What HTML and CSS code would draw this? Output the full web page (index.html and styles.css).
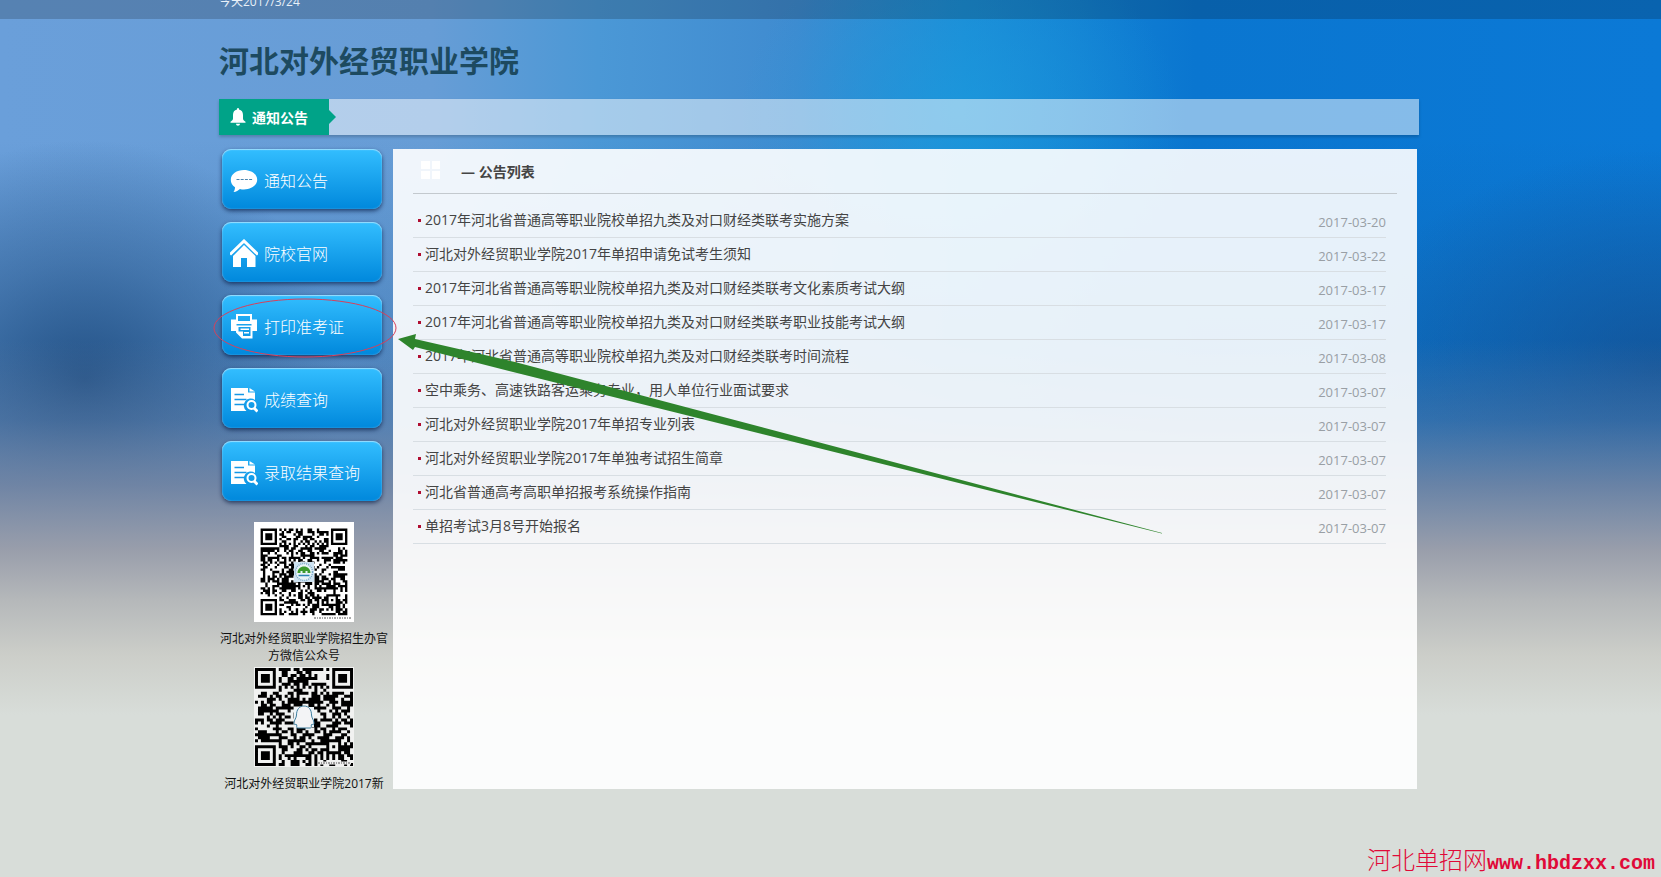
FILE: index.html
```html
<!DOCTYPE html>
<html lang="zh-CN">
<head>
<meta charset="utf-8">
<title>河北对外经贸职业学院</title>
<link rel="stylesheet" href="styles.css">
</head>
<body>
<div class="topbar"><div class="wrap">今天2017/3/24</div></div>
<div class="wrap page">
  <h1 class="site-title">河北对外经贸职业学院</h1>
  <div class="notice">
    <div class="notice-tag">
      <svg class="bell" viewBox="0 0 16 18" aria-hidden="true"><path fill="#fff" d="M7 1a1 1 0 0 1 2 0v.5c2.700.5 4 2.500 4 5.500v3.500c0 1.300 1 2 2.500 3.200v1.100H.5v-1.100C2 12.500 3 11.800 3 10.500V7c0-3 1.300-5 4-5.500zM6 15.800h4c0 1.200-.9 2-2 2s-2-.8-2-2z"/></svg>
      <span>通知公告</span>
    </div>
  </div>
  <div class="columns">
    <aside class="side">
      <nav class="menu">
        <a class="btn" href="#notice"><svg class="icon" viewBox="0 0 28 28" aria-hidden="true"><path fill="#fff" d="M14 4c7.300 0 13.200 4.200 13.200 9.700S21.300 23.500 14 23.500c-1.500 0-2.800-.1-4.100-.5-1.600 1.600-3.700 2.800-6.400 3 1-1.400 1.500-3 1.500-4.800C2.200 19.300.8 16.700.8 13.700.8 8.200 6.700 4 14 4z"/><path stroke="#4a86b0" stroke-width="1" stroke-dasharray="3 1.200" d="M6.500 13.500h16"/></svg>通知公告</a>
        <a class="btn" href="#site"><svg class="icon" viewBox="0 0 28 28" aria-hidden="true"><path fill="none" stroke="#fff" stroke-width="3" d="M0 15.500 14 2l14 13.500"/><path fill="#fff" d="M14 6 25.500 17v11H17v-9h-6v9H3V17z"/></svg>院校官网</a>
        <a class="btn" href="#print"><svg class="icon" viewBox="0 0 28 28" aria-hidden="true"><path fill="#fff" fill-rule="evenodd" d="M6 2h16v5.500h5V19h-4.500v7.500H12L6 20.500V19H1V7.500h5zm2 2v5h12V4zM6.500 12v1.500h15V12zM8.500 15v4.500H13V24h7.500v-9z"/><path fill="#fff" d="M10.500 16.500H19V18h-8.500zM14 20h5v1.500h-5z"/></svg>打印准考证</a>
        <a class="btn" href="#score"><svg class="icon" viewBox="0 0 28 28" aria-hidden="true"><path fill="#fff" d="M1 3h17v4.500h7v7.500a6.500 6.500 0 0 0-8.500 11H1zM19.500 3 25 6.500h-5.500z"/><path fill="none" stroke="#1497e6" stroke-width="1.500" d="M4.500 9.500H14M4.500 14.500h12M4.500 19.500H14"/><circle cx="21.500" cy="20" r="4" fill="none" stroke="#fff" stroke-width="2"/><path stroke="#fff" stroke-width="3" d="m24 23 3.500 3.500"/></svg>成绩查询</a>
        <a class="btn" href="#admission"><svg class="icon" viewBox="0 0 28 28" aria-hidden="true"><path fill="#fff" d="M1 3h17v4.500h7v7.500a6.500 6.500 0 0 0-8.500 11H1zM19.500 3 25 6.500h-5.500z"/><path fill="none" stroke="#1497e6" stroke-width="1.500" d="M4.500 9.500H14M4.500 14.500h12M4.500 19.500H14"/><circle cx="21.500" cy="20" r="4" fill="none" stroke="#fff" stroke-width="2"/><path stroke="#fff" stroke-width="3" d="m24 23 3.500 3.500"/></svg>录取结果查询</a>
      </nav>
      <figure class="code">
        <svg class="qr" viewBox="0 0 100 100" role="img" aria-label="微信公众号二维码">
          <rect width="100" height="100" fill="#fff"/>
          <g transform="translate(6.600 6.600) scale(2.345)"><path class="modules" data-size="37" data-seed="17" fill="#000"/></g>
          <rect x="40" y="40" width="20" height="20" fill="#cfe3f1"/>
          <circle cx="50" cy="50" r="8.500" fill="#e9f4f8" stroke="#7ba8c9" stroke-width="1.500" stroke-dasharray="1 1"/>
          <path fill="#3d9b2f" d="M43.500 51c0-4 3-6.500 6.500-6.500s6.500 2.500 6.500 6.500h-3v-2h-2v2h-3v-2h-2v2z"/>
          <path stroke="#2e86b5" stroke-width="1.500" d="M44.500 53.500h11"/>
          <path stroke="#555" stroke-width="1" stroke-dasharray="2 1 1 1" d="M60 96h37"/>
        </svg>
        <figcaption>河北对外经贸职业学院招生办官方微信公众号</figcaption>
      </figure>
      <figure class="code code-qq">
        <svg class="qr" viewBox="0 0 100 100" role="img" aria-label="新生群二维码">
          <rect width="100" height="100" fill="#f1f2f1"/>
          <g transform="translate(1 1) scale(2.970)"><path class="modules" data-size="33" data-seed="5" fill="#000"/></g>
          <path fill="#edf4f8" d="M40 40h20v20H40z"/>
          <path fill="#f3f4f6" stroke="#3f7f9f" stroke-width="1" d="M50 39c5 0 7.500 4 7.500 9 0 3 2.500 5 2.500 8 0 2-1 2-2 1l-1 2c1 1 0 2-1 2H44c-1 0-2-1-1-2l-1-2c-1 1-2 1-2-1 0-3 2.500-5 2.500-8 0-5 2.500-9 7.500-9z"/>
          <path stroke="#eee" stroke-width="3" d="M64 96h33"/><path stroke="#555" stroke-width="1" stroke-dasharray="2 1 1 1" d="M64 96h33"/>
        </svg>
        <figcaption>河北对外经贸职业学院2017新</figcaption>
      </figure>
    </aside>
    <main class="panel">
      <h2 class="panel-title">
        <svg class="grid-icon" viewBox="0 0 20 20" aria-hidden="true"><path fill="#fff" d="M0 0h9v8H0zM11 0h8v8h-8zM0 10h9v8H0zM11 10h8v8h-8z"/></svg>
        <span>— 公告列表</span>
      </h2>
      <ul class="list">
        <li><a href="#n1">2017年河北省普通高等职业院校单招九类及对口财经类联考实施方案</a><time>2017-03-20</time></li>
        <li><a href="#n2">河北对外经贸职业学院2017年单招申请免试考生须知</a><time>2017-03-22</time></li>
        <li><a href="#n3">2017年河北省普通高等职业院校单招九类及对口财经类联考文化素质考试大纲</a><time>2017-03-17</time></li>
        <li><a href="#n4">2017年河北省普通高等职业院校单招九类及对口财经类联考职业技能考试大纲</a><time>2017-03-17</time></li>
        <li><a href="#n5">2017年河北省普通高等职业院校单招九类及对口财经类联考时间流程</a><time>2017-03-08</time></li>
        <li><a href="#n6">空中乘务、高速铁路客运乘务专业，用人单位行业面试要求</a><time>2017-03-07</time></li>
        <li><a href="#n7">河北对外经贸职业学院2017年单招专业列表</a><time>2017-03-07</time></li>
        <li><a href="#n8">河北对外经贸职业学院2017年单独考试招生简章</a><time>2017-03-07</time></li>
        <li><a href="#n9">河北省普通高考高职单招报考系统操作指南</a><time>2017-03-07</time></li>
        <li><a href="#n10">单招考试3月8号开始报名</a><time>2017-03-07</time></li>
      </ul>
    </main>
    <svg class="marks" viewBox="0 0 960 400" aria-hidden="true">
      <ellipse cx="86" cy="179" rx="91" ry="29" fill="none" stroke="#d8405a" stroke-width="1"/>
      <path fill="#2e842c" d="M179 190l18-5-1 5 100 23 647 171v.5L290 222l-94-24-2 3z"/>
    </svg>
  </div>
</div>
<div class="watermark">河北单招网<span>www.hbdzxx.com</span></div>
<script src="qr.js"></script>
</body>
</html>
```

FILE: styles.css
```css
* { box-sizing: border-box; }
body {
  margin: 0;
  min-height: 100vh;
  position: relative;
  overflow-x: hidden;
  font-family: "Open Sans", "Noto Sans CJK SC", sans-serif;
  font-size: 14px;
  color: #444;
  background:
    linear-gradient(to bottom, rgba(100,125,165,0) 340px, rgba(102,128,165,.4) 420px, rgba(120,136,164,.85) 485px, #999eab 550px, #b5b8ba 600px, #cccec9 655px, #d8ddd9 715px),
    radial-gradient(ellipse 260px 240px at 85px 380px, rgba(34,80,132,.95), rgba(44,90,142,.5) 50%, rgba(54,100,152,0)),
    radial-gradient(ellipse 320px 220px at 1661px 370px, rgba(20,76,140,.7), rgba(20,76,140,0)),
    radial-gradient(ellipse 220px 170px at 960px 110px, rgba(28,156,222,.65), rgba(28,156,222,0)),
    linear-gradient(to bottom, rgba(20,80,140,0) 140px, rgba(20,80,140,.35) 400px),
    linear-gradient(to right, #6a9fda 0, #679dd6 26%, #4b98d6 36%, #3f8bd0 48%, #1c8cd6 58%, #0a76d0 72%, #0b79d6 100%);
}
.wrap { width: 100%; max-width: 1200px; margin: 0 auto; }
.topbar {
  height: 19px;
  padding-right: 23px;
  overflow: hidden;
  display: flex;
  align-items: flex-end;
  background: rgba(0,0,0,.18);
  color: #e8f0f8;
  font-size: 12px;
  line-height: 34px;
}
.page { width: calc(100% - 23px); max-width: 1200px; margin-left: max(0px, calc((100% - 1223px) / 2)); }
.site-title {
  margin: 0;
  padding: 22px 0 18px;
  font-size: 30px;
  line-height: 40px;
  color: #1d4a60;
}
.notice {
  height: 36px;
  display: flex;
  background: rgba(255,255,255,.5);
  box-shadow: 0 2px 3px rgba(0,0,0,.2);
}
.notice-tag {
  position: relative;
  width: 110px;
  padding-left: 11px;
  display: flex;
  align-items: center;
  gap: 6px;
  background: #00a388;
  color: #fff;
  font-weight: bold;
}
.notice-tag::after {
  content: "";
  position: absolute;
  left: 100%;
  top: 11px;
  border: 7px solid transparent;
  border-left-color: #00a388;
  border-right: 0;
}
.bell { width: 16px; height: 18px; }
.columns {
  position: relative;
  display: flex;
  gap: 4px;
  margin-top: 14px;
  padding-right: 2px;
}
.side { flex: 0 0 170px; }
.menu { display: flex; flex-direction: column; gap: 13px; padding: 0 7px 0 3px; }
.btn {
  height: 60px;
  padding: 2px 0 0 8px;
  display: flex;
  align-items: center;
  gap: 6px;
  border-radius: 9px;
  background: linear-gradient(#33beff, #0088dc);
  box-shadow: inset 0 1px 1px rgba(255,255,255,.45), inset 0 0 2px rgba(255,255,255,.3), 0 2px 4px rgba(0,20,60,.65);
  color: #fff;
  font-size: 16px;
  font-weight: 300;
  text-decoration: none;
}
.icon { width: 28px; height: 28px; }
.code { margin: 21px 0 0; text-align: center; color: #111; font-size: 12px; line-height: 17px; }
.code-qq { margin-top: 3px; }
.qr { display: block; width: 100px; height: 100px; margin: 0 auto 8px; }
.code-qq figcaption { height: 13px; }
.panel {
  flex: 1;
  min-width: 0;
  min-height: 640px;
  padding: 0 20px;
  background: rgba(255,255,255,.9);
}
.panel-title {
  height: 45px;
  margin: 0 0 8px;
  padding: 0 8px;
  display: flex;
  align-items: center;
  gap: 20px;
  border-bottom: 1px solid #c3c9ce;
  font-size: 14px;
}
.grid-icon { width: 20px; height: 20px; }
.list { list-style: none; margin: 0; padding: 0 11px 0 0; }
.list li {
  height: 34px;
  padding-left: 5px;
  display: flex;
  align-items: center;
  border-bottom: 1px solid #d8dee3;
}
.list li:first-child { height: 36px; padding-top: 2px; }
.list li::before { content: ""; width: 3px; height: 3px; margin-right: 4px; background: #b00c30; }
.list a { flex: 1; padding-bottom: 4px; color: #444; text-decoration: none; }
.list time { padding-top: 2px; color: #999fa5; font-size: 13px; }
.marks { position: absolute; left: 0; top: 0; width: 960px; height: 400px; overflow: visible; pointer-events: none; }
.watermark {
  position: absolute;
  right: 6px;
  bottom: 2px;
  color: #e00a38;
  font-size: 24px;
  font-weight: 300;
  line-height: 28px;
}
.watermark span { font: 20px "Liberation Mono", monospace; font-weight: bold; }
```

FILE: qr.js
```js
document.querySelectorAll('.modules').forEach(function (path) {
  var n = Number(path.dataset.size);
  var seed = Number(path.dataset.seed);
  function random() {
    seed = (seed * 1103515245 + 12345) % 2147483648;
    return seed / 2147483648;
  }
  function ring(x, y, cx, cy) {
    return Math.max(Math.abs(x - cx), Math.abs(y - cy));
  }
  var d = '';
  for (var y = 0; y < n; y++) {
    for (var x = 0; x < n; x++) {
      var on = random() < 0.52;
      if (x === 6 || y === 6) on = (x + y) % 2 === 0;
      var a = ring(x, y, n - 7, n - 7);
      if (a <= 2) on = a !== 1;
      [[3, 3], [n - 4, 3], [3, n - 4]].forEach(function (c) {
        var r = ring(x, y, c[0], c[1]);
        if (r <= 4) on = r !== 2 && r !== 4;
      });
      if (on) d += 'M' + x + ' ' + y + 'h1v1h-1z';
    }
  }
  path.setAttribute('d', d);
});
```
